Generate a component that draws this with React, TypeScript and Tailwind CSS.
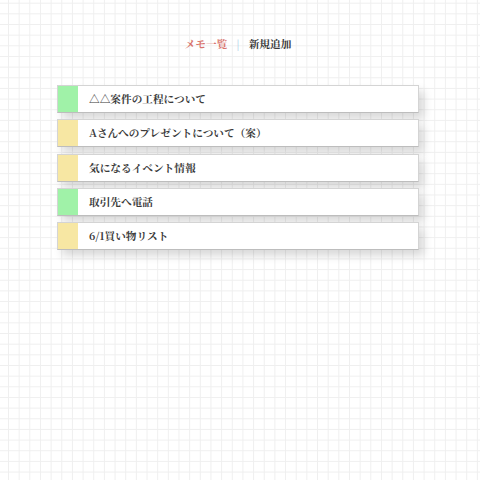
import React from "react";

const memos = [
  { title: "△△案件の工程について", color: "bg-[#a0f2a8]" },
  { title: "Aさんへのプレゼントについて（案）", color: "bg-[#f7e7a3]" },
  { title: "気になるイベント情報", color: "bg-[#f7e7a3]" },
  { title: "取引先へ電話", color: "bg-[#a0f2a8]" },
  { title: "6/1買い物リスト", color: "bg-[#f7e7a3]" },
];

export default function App() {
  return (
    <div
      className="w-[480px] h-[480px] overflow-hidden bg-white"
      style={{
        backgroundImage:
          "linear-gradient(to right, #efefef 1px, transparent 1px), linear-gradient(to bottom, #efefef 1px, transparent 1px)",
        backgroundSize: "10.67px 10.67px",
        backgroundPosition: "8px 2.7px",
        fontFamily: '"Noto Serif CJK JP", "Liberation Serif", "Noto Sans CJK JP", serif',
      }}
    >
      <div className="flex justify-center items-center pt-[36px] pr-[4px] text-[10.67px] font-bold leading-[16px]">
        <span className="text-[#d8746c]">メモ一覧</span>
        <span className="mx-[9px] text-[#9cc9e6] font-normal">|</span>
        <span className="text-[#3a3a3a]">新規追加</span>
      </div>
      <div className="flex flex-col gap-[6.3px] mt-[33px] ml-[57px] w-[362px]">
        {memos.map((m) => (
          <div
            key={m.title}
            className="flex h-[28px] bg-white border border-[#d4d4d4] border-b-[#bdbdbd] shadow-[5px_6px_9px_rgba(0,0,0,0.15)]"
          >
            <div className={`w-[20px] h-full ${m.color}`} />
            <div className="flex items-center pl-[11px] text-[10.67px] font-bold text-[#3a3a3a]">
              {m.title}
            </div>
          </div>
        ))}
      </div>
    </div>
  );
}
